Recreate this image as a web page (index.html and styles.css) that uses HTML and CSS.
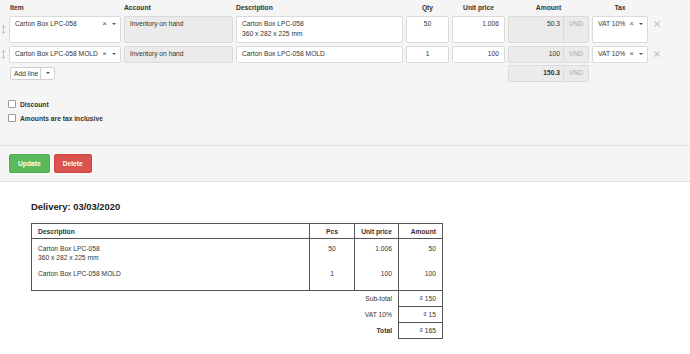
FILE: index.html
```html
<!DOCTYPE html>
<html>
<head>
<meta charset="utf-8">
<link rel="stylesheet" href="styles.css">
</head>
<body>
<div class="form">
  <div class="lines">
    <div class="row head">
      <div></div>
      <div>Item</div>
      <div>Account</div>
      <div>Description</div>
      <div class="c">Qty</div>
      <div class="c">Unit price</div>
      <div class="c">Amount</div>
      <div class="c">Tax</div>
      <div></div>
    </div>

    <div class="row line first">
      <div class="handle"><svg width="5" height="9" viewBox="0 0 5 9"><path d="M2.5 0.5V8.5M0.8 2.3L2.5 0.6L4.2 2.3M0.8 6.7L2.5 8.4L4.2 6.7" stroke="#bdbdbd" fill="none" stroke-width="0.9"/></svg></div>
      <div class="field select"><span class="val">Carton Box LPC-058</span><span class="clear">×</span><span class="caret"></span></div>
      <div class="field ro">Inventory on hand</div>
      <div class="field">Carton Box LPC-058<br>360 x 282 x 225 mm</div>
      <div class="field c">50</div>
      <div class="field r">1.006</div>
      <div class="amount"><div class="field ro r amt">50.3</div><div class="addon">VND</div></div>
      <div class="field select"><span class="val">VAT 10%</span><span class="clear">×</span><span class="caret"></span></div>
      <div class="remove"><svg width="6" height="6" viewBox="0 0 6 6"><path d="M0.5 0.5L5.5 5.5M5.5 0.5L0.5 5.5" stroke="#c4c4c4" stroke-width="1.1"/></svg></div>
    </div>

    <div class="row line">
      <div class="handle"><svg width="5" height="9" viewBox="0 0 5 9"><path d="M2.5 0.5V8.5M0.8 2.3L2.5 0.6L4.2 2.3M0.8 6.7L2.5 8.4L4.2 6.7" stroke="#bdbdbd" fill="none" stroke-width="0.9"/></svg></div>
      <div class="field select"><span class="val">Carton Box LPC-058 MOLD</span><span class="clear">×</span><span class="caret"></span></div>
      <div class="field ro">Inventory on hand</div>
      <div class="field">Carton Box LPC-058 MOLD</div>
      <div class="field c">1</div>
      <div class="field r">100</div>
      <div class="amount"><div class="field ro r amt">100</div><div class="addon">VND</div></div>
      <div class="field select"><span class="val">VAT 10%</span><span class="clear">×</span><span class="caret"></span></div>
      <div class="remove"><svg width="6" height="6" viewBox="0 0 6 6"><path d="M0.5 0.5L5.5 5.5M5.5 0.5L0.5 5.5" stroke="#c4c4c4" stroke-width="1.1"/></svg></div>
    </div>

    <div class="row total">
      <div class="addline">
        <div class="btn-group"><span class="main">Add line</span><span class="drop"><span class="caret"></span></span></div>
      </div>
      <div class="amount total-amount"><div class="field ro r amt bold">150.3</div><div class="addon">VND</div></div>
    </div>
  </div>

  <div class="options">
    <div class="check"><span class="box"></span>Discount</div>
    <div class="check"><span class="box"></span>Amounts are tax inclusive</div>
  </div>

  <div class="actions">
    <span class="btn green">Update</span>
    <span class="btn red">Delete</span>
  </div>
</div>

<div class="doc">
  <div class="doc-title">Delivery: 03/03/2020</div>
  <table class="doc-table">
    <colgroup>
      <col class="c-desc"><col class="c-pcs"><col class="c-price"><col class="c-amt">
    </colgroup>
    <thead>
      <tr>
        <th class="l">Description</th>
        <th class="c">Pcs</th>
        <th class="r">Unit price</th>
        <th class="r">Amount</th>
      </tr>
    </thead>
    <tbody>
      <tr>
        <td>Carton Box LPC-058<br>360 x 282 x 225 mm</td>
        <td class="c">50</td>
        <td class="r">1.006</td>
        <td class="r">50</td>
      </tr>
      <tr class="last">
        <td>Carton Box LPC-058 MOLD</td>
        <td class="c">1</td>
        <td class="r">100</td>
        <td class="r">100</td>
      </tr>
    </tbody>
    <tfoot>
      <tr>
        <td class="label" colspan="3">Sub-total</td>
        <td class="sum">₫ 150</td>
      </tr>
      <tr>
        <td class="label" colspan="3">VAT 10%</td>
        <td class="sum">₫ 15</td>
      </tr>
      <tr>
        <td class="label bold" colspan="3">Total</td>
        <td class="sum">₫ 165</td>
      </tr>
    </tfoot>
  </table>
</div>
</body>
</html>
```

FILE: styles.css
```css
* { box-sizing: border-box; }

body {
  margin: 0;
  font-family: "Liberation Sans", Arial, sans-serif;
  font-size: 6.7px;
  color: #333;
  background: #fff;
}

.c { text-align: center; }
.r { text-align: right; }
.l { text-align: left; }
.bold { font-weight: bold; }

/* ---------- form ---------- */
.form {
  background: #f5f5f5;
  border-bottom: 1px solid #e3e3e3;
}

.lines {
  display: flex;
  flex-direction: column;
}

.row {
  display: grid;
  grid-template-columns: 6px 112px 109px 167px 43px 53px 81px 56px 12px;
  column-gap: 3px;
}

.head {
  height: 14px;
  align-items: center;
  font-weight: bold;
  color: #333;
}
.head > div:nth-child(2) { padding-left: 1px; }

.line { margin-top: 3px; }
.line.first { margin-top: 2px; }

.field {
  background: #fff;
  border: 1px solid #dadada;
  border-radius: 2px;
  padding: 2px 5px 3px;
  line-height: 10px;
  white-space: nowrap;
  overflow: hidden;
}
.field.ro { background: #ebebeb; }
.field.r { padding-right: 5px; }

.select {
  display: flex;
  align-items: flex-start;
  padding-right: 4px;
}
.select .val {
  flex: 1;
  overflow: hidden;
}
.select .clear {
  font-size: 8px;
  line-height: 10px;
  color: #555;
  margin-right: 5px;
  margin-left: 2px;
}
.caret {
  display: inline-block;
  width: 0;
  height: 0;
  border-left: 2px solid transparent;
  border-right: 2px solid transparent;
  border-top: 2.5px solid #555;
  margin-top: 4px;
}

.handle {
  align-self: center;
  display: flex;
  justify-content: center;
  padding-left: 1px;
}
.handle svg { display: block; }

.remove {
  padding-top: 5px;
  padding-left: 3px;
}
.remove svg { display: block; }

.amount {
  display: flex;
}
.amount .amt {
  flex: 1;
  border-top-right-radius: 0;
  border-bottom-right-radius: 0;
  padding-right: 3px;
}
.addon {
  width: 25px;
  background: #ebebeb;
  border: 1px solid #dadada;
  border-left: none;
  border-radius: 0 2px 2px 0;
  color: #aaa;
  text-align: center;
  padding-top: 2px;
  line-height: 10px;
}

.total {
  margin-top: 2px;
  height: 16px;
}
.addline {
  grid-column: 2;
  padding-top: 2px;
}
.total-amount {
  grid-column: 7;
}
.total-amount .amt,
.total-amount .addon { padding-top: 2px; }

.btn-group {
  display: inline-flex;
  height: 13px;
  margin-left: 1px;
  border: 1px solid #cfcfcf;
  border-radius: 2px;
  background: #fff;
  color: #333;
}
.btn-group .main {
  padding: 0 2px 0 3px;
  line-height: 11px;
}
.btn-group .drop {
  width: 14px;
  border-left: 1px solid #cfcfcf;
  display: flex;
  justify-content: center;
}

.options {
  margin-top: 16px;
  padding-left: 8px;
}
.check {
  display: flex;
  align-items: center;
  height: 14px;
  font-weight: bold;
  color: #333;
}
.box {
  width: 8px;
  height: 8px;
  background: #fff;
  border: 1px solid #9a9a9a;
  border-radius: 1px;
  margin-right: 4px;
}

.actions {
  margin-top: 20px;
  border-top: 1px solid #e3e3e3;
  padding: 8px 9px;
  display: flex;
  gap: 4px;
}
.btn {
  height: 19px;
  line-height: 17px;
  padding: 0 8px;
  border-radius: 2px;
  font-weight: bold;
  color: #fff;
  border: 1px solid transparent;
  box-shadow: 0 0 0 1px rgba(255,255,255,0.7);
}
.green { background: #5cb85c; border-color: #4cae4c; }
.red { background: #d9534f; border-color: #d43f3a; }

/* ---------- document ---------- */
.doc {
  padding: 19px 0 20px 31px;
}
.doc-title {
  font-size: 9.4px;
  font-weight: bold;
  line-height: 12px;
  color: #222;
}

.doc-table {
  margin-top: 10px;
  border-collapse: collapse;
  table-layout: fixed;
  width: 411px;
  color: #333;
}
.c-desc { width: 278px; }
.c-pcs { width: 45px; }
.c-price { width: 44px; }
.c-amt { width: 44px; }

.doc-table th {
  border: 1px solid #555;
  height: 15px;
  padding: 0 6px;
  font-weight: bold;
  line-height: 9px;
}
.doc-table tbody td {
  border-left: 1px solid #555;
  border-right: 1px solid #555;
  padding: 4.5px 6px 2.5px;
  line-height: 9px;
  vertical-align: top;
}
.doc-table tbody tr.last td {
  padding-bottom: 12.5px;
  border-bottom: 1px solid #555;
}
.doc-table tfoot td {
  height: 16px;
  padding: 0 6px;
  line-height: 9px;
}
.doc-table .label {
  text-align: right;
}
.doc-table .sum {
  text-align: right;
  border: 1px solid #555;
}
```
